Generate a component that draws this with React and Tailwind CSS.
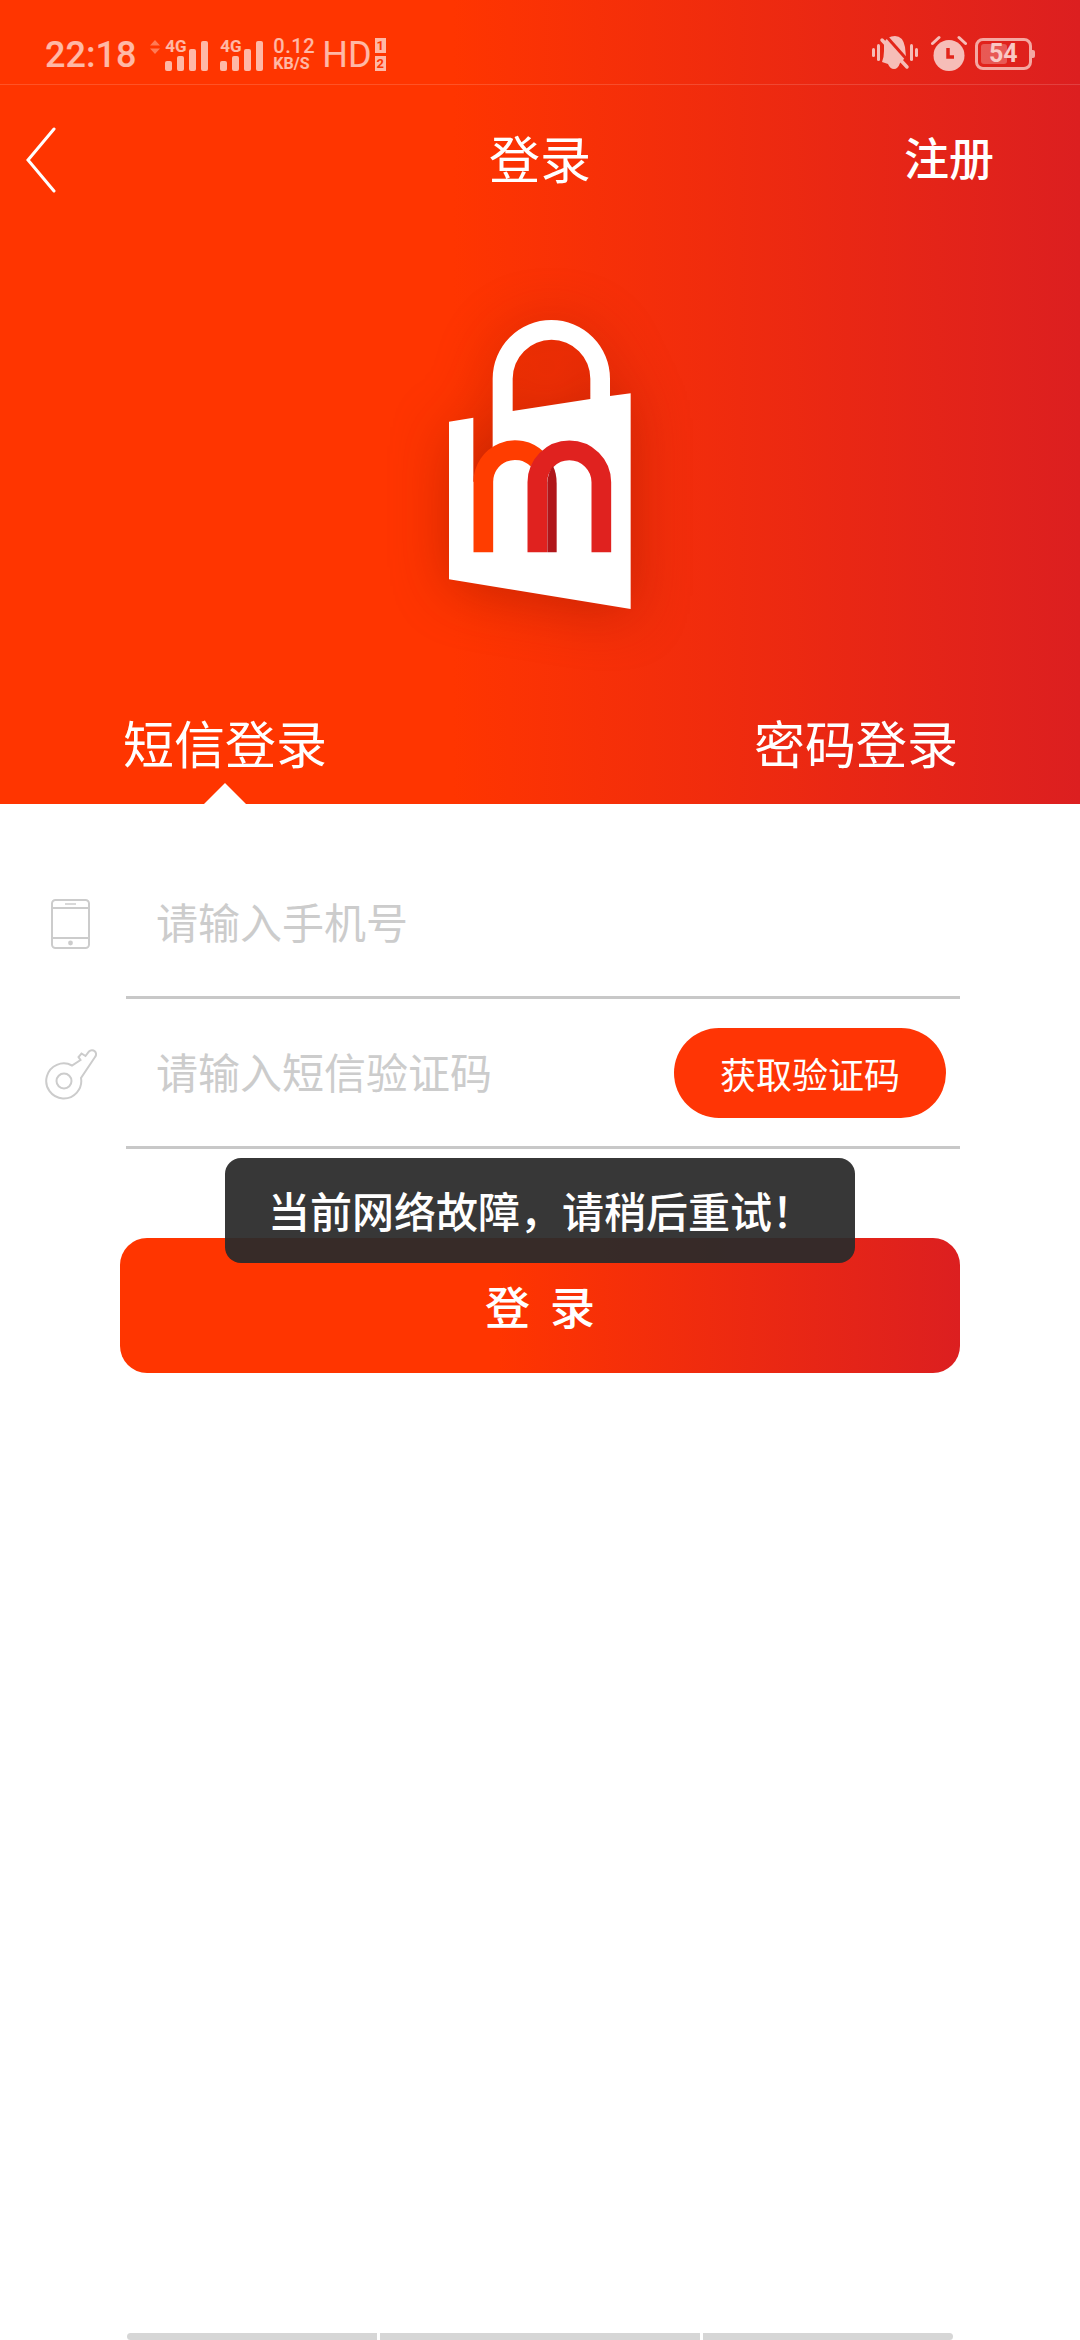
import React from 'react';

const cjk = "font-['Noto_Sans_CJK_SC','Noto_Sans',sans-serif]";
const roboto = "font-['Roboto','Noto_Sans',sans-serif]";

const Signal = ({ arrows }) => (
  <div className="relative w-[43px] h-[32px] shrink-0">
    {arrows && (
      <svg className="absolute left-[-15px] top-[1px]" width="10" height="14" viewBox="0 0 10 14" fill="#ff7a55">
        <path d="M5 0 L10 5.5 H0 Z M0 8.5 H10 L5 14 H5 Z" />
      </svg>
    )}
    <span className={`absolute left-0 top-[-3px] text-[17px] leading-[20px] font-bold text-white/65 ${roboto}`}>4G</span>
    <div className="absolute inset-0 flex items-end gap-[5px]">
      <div className="w-[7px] h-[10px] rounded-[2px] bg-white/65"></div>
      <div className="w-[7px] h-[15px] rounded-[2px] bg-white/65"></div>
      <div className="w-[7px] h-[22px] rounded-[2px] bg-white/65"></div>
      <div className="w-[7px] h-[30px] rounded-[2px] bg-white/65"></div>
    </div>
  </div>
);

const MuteBell = () => (
  <svg width="46" height="36" viewBox="0 0 46 36" fill="none">
    <g fill="#f6bdb8">
      <rect x="0" y="13" width="3" height="9" rx="1.5" />
      <rect x="5" y="9" width="3" height="17" rx="1.5" />
      <rect x="38" y="9" width="3" height="17" rx="1.5" />
      <rect x="43" y="13" width="3" height="9" rx="1.5" />
      <path d="M12 8 Q15 1 23 1 Q31 1 33 12 L34 22 L28 28 Q26 34 22 34 Q18 34 16 29 L10 27 Q12 22 12 16 Z" />
    </g>
    <path d="M14 1 L38 28" stroke="#e3261a" strokeWidth="3" />
    <path d="M10 5 L35 32" stroke="#f6bdb8" strokeWidth="3.5" strokeLinecap="round" />
  </svg>
);

const Alarm = () => (
  <svg width="36" height="36" viewBox="0 0 36 36" fill="none">
    <circle cx="18" cy="20.5" r="15.5" fill="#f6bdb8" />
    <path d="M17 13 V22 H23" stroke="#e2241a" strokeWidth="3.5" />
    <path d="M1.5 8.5 L8 2.5 M34.5 8.5 L28 2.5" stroke="#f6bdb8" strokeWidth="3" strokeLinecap="round" />
  </svg>
);

const Battery = () => (
  <div className="relative w-[60px] h-[32px] shrink-0">
    <div className="absolute left-0 top-0 w-[57px] h-[32px] rounded-[8px] border-[3px] border-[#f4a8a2]"></div>
    <div className="absolute left-[6px] top-[6px] w-[26px] h-[20px] rounded-[3px] bg-white/25"></div>
    <div className="absolute right-0 top-[12px] w-[3px] h-[8px] rounded-r-[2px] bg-[#f4a8a2]"></div>
    <span className={`absolute left-[14px] top-0 text-[25px] leading-[32px] font-bold text-[#f9c9c5] ${roboto}`}>54</span>
  </div>
);

const StatusBar = () => (
  <div className="h-[85px] shrink-0 border-b border-white/15 flex items-start justify-between pt-[38px] pl-[45px] pr-[45px]">
    <div className="flex items-start">
      <span className={`text-[36px] leading-[34px] font-medium text-white/65 ${roboto}`}>22:18</span>
      <div className="flex ml-[29px] gap-[12px] pt-[1px]">
        <Signal arrows />
        <Signal />
      </div>
      <div className={`ml-[10px] w-[42px] flex flex-col text-white/65 ${roboto}`}>
        <span className="text-[20px] leading-[16px] font-medium tracking-[0.5px]">0.12</span>
        <span className="text-[16px] leading-[14px] mt-[3px] font-bold">KB/S</span>
      </div>
      <span className={`ml-[7px] text-[36px] leading-[34px] text-white/65 ${roboto}`}>HD</span>
      <div className={`ml-[3px] flex flex-col gap-[3px] text-[13px] leading-[15px] font-bold text-[#ff3500] ${roboto}`}>
        <span className="w-[11px] h-[15px] bg-white/65 text-center">1</span>
        <span className="w-[11px] h-[15px] bg-white/65 text-center">2</span>
      </div>
    </div>
    <div className="flex items-start -mt-[3px]">
      <MuteBell />
      <div className="ml-[13px]">
        <Alarm />
      </div>
      <div className="ml-[8px] mt-[3px]">
        <Battery />
      </div>
    </div>
  </div>
);

const Logo = () => (
  <svg
    className="mx-auto block shrink-0 drop-shadow-[0_6px_28px_rgba(140,20,0,0.45)]"
    width="280"
    height="340"
    viewBox="0 0 840 1020"
    fill="none"
  >
    <path
      fillRule="evenodd"
      fill="#ffffff"
      d="M147 395 L220 383 L220 575 L278 575 L278 266 A176 176 0 0 1 630 266 L630 318 L692 310 L692 957 L147 868 Z M338 363 L338 266 A116.5 116.5 0 0 1 571 266 L571 327 Z"
    />
    <path d="M250 787 V575 A95 95 0 0 1 412 508" stroke="#ff3d00" strokeWidth="59" />
    <path d="M412 787 V577 A96 96 0 0 1 604 577 V787" stroke="#e0221f" strokeWidth="59" />
    <path d="M442 787 V577 Q444 547 459 528 Q470 550 470 580 V787 Z" fill="#b0161a" />
  </svg>
);

const PhoneIcon = () => (
  <svg width="39" height="50" viewBox="0 0 39 50" fill="none" stroke="#cccccc" strokeWidth="2">
    <rect x="1" y="1" width="37" height="48" rx="3.5" />
    <path d="M1 9 H38 M1 39 H38" />
    <path d="M14 5 H25" strokeWidth="1.5" />
    <circle cx="19.5" cy="44" r="2.4" fill="#cccccc" stroke="none" />
  </svg>
);

const KeyIcon = () => (
  <svg width="52" height="52" viewBox="0 0 52 52" fill="none" stroke="#cccccc" strokeWidth="2">
    <circle cx="19" cy="33" r="7.5" />
    <path d="M27 17.5 A17.5 17.5 0 1 0 36 30 L50 9 A3.6 3.6 0 0 0 44 3.5 L40.5 8 L36.5 5.5 L33.5 9 L35.5 12 Z" />
  </svg>
);

const App = () => {
  return (
    <div className={`relative w-[1080px] h-[2340px] bg-white flex flex-col overflow-hidden ${cjk}`}>
      <div className="relative h-[804px] shrink-0 flex flex-col bg-linear-to-r/srgb from-[#ff3500] from-[42%] to-[#dc1f20] text-white">
        <StatusBar />

        <div className="h-[150px] shrink-0 grid grid-cols-[1fr_auto_1fr] items-center">
          <div className="pl-[26px]">
            <svg className="block" width="30" height="66" viewBox="0 0 30 66" fill="none" stroke="#ffffff" strokeWidth="3" strokeLinecap="round">
              <path d="M28 2 L2 33 L28 64" />
            </svg>
          </div>
          <span className="mb-[6px] text-[51px] leading-[54px]">登录</span>
          <span className="mb-[6px] justify-self-end pr-[86px] text-[45px] leading-[54px] font-medium">注册</span>
        </div>

        <div className="h-[55px] shrink-0"></div>
        <Logo />

        <div className="mt-[82px] flex justify-between pl-[123px] pr-[122px] text-[51px] leading-[60px]">
          <span>短信登录</span>
          <span>密码登录</span>
        </div>

        <div className="absolute left-[204px] bottom-0 w-[42px] h-[21px] bg-white [clip-path:polygon(50%_0,100%_100%,0_100%)]"></div>
      </div>

      <div className="mt-[45px] flex flex-col text-[42px] text-[#cccccc]">
        <div className="flex">
          <div className="w-[126px] shrink-0 pl-[51px] flex items-center">
            <PhoneIcon />
          </div>
          <div className="flex-1 mr-[120px] h-[150px] border-b-[3px] border-[#c8c8c8] flex items-center pl-[30px] pb-[3px]">
            <span className="leading-[50px]">请输入手机号</span>
          </div>
        </div>
        <div className="flex">
          <div className="w-[126px] shrink-0 pl-[45px] flex items-center">
            <KeyIcon />
          </div>
          <div className="flex-1 mr-[120px] h-[150px] border-b-[3px] border-[#c8c8c8] flex items-center justify-between pl-[30px] pr-[14px]">
            <span className="leading-[50px] -mt-[3px]">请输入短信验证码</span>
            <button className="w-[272px] h-[90px] rounded-full bg-[#ff3505] text-white text-[36px] leading-[50px]">
              获取验证码
            </button>
          </div>
        </div>
      </div>

      <button className="mt-[89px] mx-[120px] h-[135px] shrink-0 rounded-[27px] bg-linear-to-r/srgb from-[#ff3500] from-[45%] to-[#dc1f20] text-white text-[45px] font-medium">
        <span className="inline-flex gap-[20px] -mt-[2px]">
          <span>登</span>
          <span>录</span>
        </span>
      </button>

      <div className="mt-auto h-[7px] flex gap-[3px] pl-[127px]">
        <div className="w-[250px] rounded-l-[6px] bg-[#d6d6d6]"></div>
        <div className="w-[320px] bg-[#d6d6d6]"></div>
        <div className="w-[250px] rounded-r-[6px] bg-[#d6d6d6]"></div>
      </div>

      {/* toast sits over the form */}
      <div className="absolute left-[225px] top-[1158px] w-[630px] h-[105px] rounded-[16px] bg-[#2a2a2a]/[0.94] text-white text-[42px] leading-[103px] pl-[43px] font-medium whitespace-nowrap">
        当前网络故障，请稍后重试！
      </div>
    </div>
  );
};

export default App;
